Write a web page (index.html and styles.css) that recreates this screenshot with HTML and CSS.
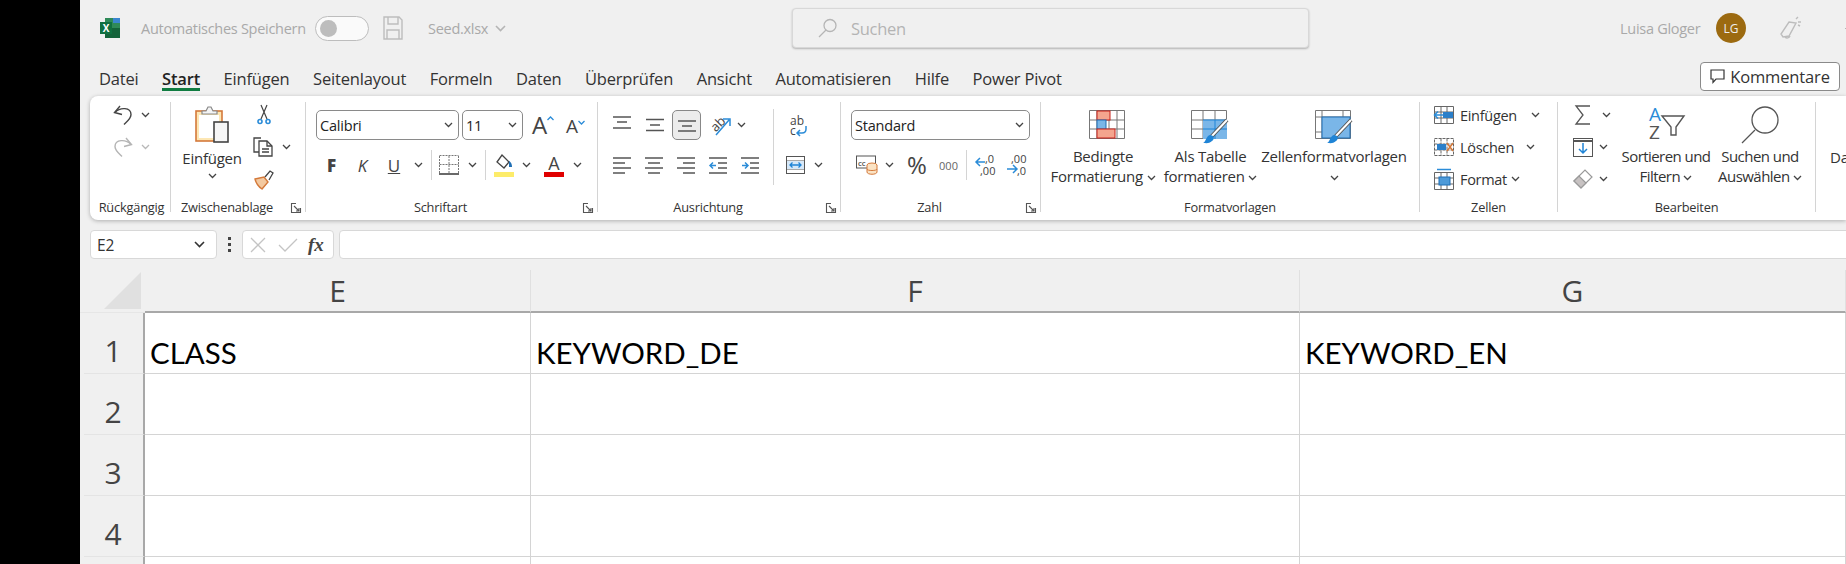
FILE: index.html
```html
<!DOCTYPE html>
<html lang="de">
<head>
<meta charset="utf-8">
<title>Seed.xlsx</title>
<link rel="stylesheet" href="styles.css">
</head>
<body>
<div class="strip"></div>
<div class="app">
  <header class="titlebar">
    <svg class="ml20" width="20" height="20" viewBox="0 0 20 20"><rect x="5" y="0" width="15" height="10" fill="#2f8a58"/><rect x="13" y="0" width="7" height="5" fill="#3a86cf"/><rect x="5" y="10" width="15" height="10" fill="#14633a"/><rect x="0" y="4" width="12" height="12" fill="#107040"/><text x="6" y="14" class="xl">X</text></svg>
    <span class="tt w166 ml21">Automatisches Speichern</span>
    <span class="toggle ml8"><i></i></span>
    <svg class="ml14" width="20" height="24" viewBox="0 0 20 24" fill="none" stroke="#bdbdbd" stroke-width="1.4"><path d="M1 1h15l3 3v19H1z"/><path d="M5 1v7h10V1M4 23v-9h12v9"/></svg>
    <span class="tt w60 ml25">Seed.xlsx</span>
    <svg class="ml7" width="11" height="7" viewBox="0 0 11 7" fill="none" stroke="#b5b5b5" stroke-width="1.6"><path d="M1 1l4.500 4.500L10 1"/></svg>
    <div class="search">
      <svg width="20" height="20" viewBox="0 0 20 20" fill="none" stroke="#b5b5b5" stroke-width="1.3"><circle cx="12" cy="7.500" r="6"/><path d="M8 12l-7 7"/></svg>
      <span class="stext">Suchen</span>
    </div>
    <span class="tt w82 ml311">Luisa Gloger</span>
    <span class="avatar ml14">LG</span>
    <svg class="ml34" width="22" height="24" viewBox="0 0 22 24" fill="none" stroke="#bdbdbd" stroke-width="1.400"><path d="M9 6l7 1-7 13-6 1-2-3zM5 21a3 3 0 0 0 5-1M16 3l2-2M18 6h3M18 9l2 1"/></svg>
    <span class="minus"></span>
  </header>

  <nav class="tabs">
    <span class="tab">Datei</span>
    <span class="tab active">Start</span>
    <span class="tab">Einfügen</span>
    <span class="tab">Seitenlayout</span>
    <span class="tab">Formeln</span>
    <span class="tab">Daten</span>
    <span class="tab">Überprüfen</span>
    <span class="tab">Ansicht</span>
    <span class="tab">Automatisieren</span>
    <span class="tab">Hilfe</span>
    <span class="tab">Power Pivot</span>
    <button class="comments"><svg width="15" height="15" viewBox="0 0 15 15" fill="none" stroke="#333" stroke-width="1.200"><path d="M1 1h13v9H6l-3 3.500V10H1z"/></svg>Kommentare</button>
  </nav>

  <section class="ribbon">
    <!-- Rückgängig -->
    <div class="group g1">
      <div class="body stack pl23">
        <div class="row">
          <svg width="20" height="20" viewBox="0 0 20 20" fill="none" stroke="#444" stroke-width="1.400"><path d="M7 1L1.500 7.500 9 9.500"/><path d="M2 7.500C7 2 18 2 18 9.500c0 4-3.500 6.500-7 10"/></svg>
          <svg class="chev ml8" viewBox="0 0 9 6"><path d="M1 1l3.500 3.500L8 1"/></svg>
        </div>
        <div class="row">
          <svg width="20" height="20" viewBox="0 0 20 20" fill="none" stroke="#b4b4b4" stroke-width="1.400"><path d="M13 1l5.500 6.500L11 9.500"/><path d="M18 7.500C13 2 2 2 2 9.500c0 4 3.500 6.500 7 10"/></svg>
          <svg class="chev dim ml8" viewBox="0 0 9 6"><path d="M1 1l3.500 3.500L8 1"/></svg>
        </div>
      </div>
      <div class="lab first"><span>Rückgängig</span></div>
    </div>

    <!-- Zwischenablage -->
    <div class="group g2">
      <div class="body flex">
        <div class="big w82">
          <svg class="pad-t4" width="34" height="37" viewBox="0 0 34 37"><rect x="1" y="5" width="26" height="30" fill="#fde7b4" stroke="#d4793a" stroke-width="1.600"/><rect x="4" y="9" width="20" height="23" fill="#fff"/><path d="M7 8V5h4l2-4h3l2 4h4v3z" fill="#f4f4f4" stroke="#888" stroke-width="1.200"/><rect x="19" y="16" width="14" height="20" fill="#f6f6f6" stroke="#444" stroke-width="1.600"/></svg>
          <span class="bigtext einf">Einfügen</span>
          <svg class="chev mt5" viewBox="0 0 9 6"><path d="M1 1l3.500 3.500L8 1"/></svg>
        </div>
        <div class="stack">
          <div class="row">
            <svg class="ml4" width="14" height="20" viewBox="0 0 14 20" fill="none" stroke="#444" stroke-width="1.200"><path d="M4 0l6 14M10 0L4 14"/><g stroke="#2b8cd8" stroke-width="1.600"><circle cx="3" cy="16.500" r="2"/><circle cx="11" cy="16.500" r="2"/></g></svg>
          </div>
          <div class="row">
            <svg width="20" height="20" viewBox="0 0 20 20" fill="none" stroke="#444" stroke-width="1.300"><path d="M8 1H1v14h5"/><path d="M6 4h8l5 5v10H6z" fill="#fff"/><path d="M14 4v5h5M9 12h7M9 15h7"/></svg>
            <svg class="chev ml9" viewBox="0 0 9 6"><path d="M1 1l3.500 3.500L8 1"/></svg>
          </div>
          <div class="row">
            <svg class="ml1" width="20" height="19" viewBox="0 0 20 19"><path d="M1 9l9-2 4 5-6 7C5 17 2 13 1 9z" fill="#f3c9a0" stroke="#d4793a" stroke-width="1.400"/><path d="M11 7l5-6 3 2-4 7" fill="#fff" stroke="#444" stroke-width="1.300"/></svg>
          </div>
        </div>
      </div>
      <div class="lab"><span>Zwischenablage</span><svg class="launch" viewBox="0 0 10 10" fill="none" stroke="#555" stroke-width="1.100"><path d="M9.500 5V9.500H.5V.5H5"/><path d="M3 3l5 5M8 5v3H5"/></svg></div>
    </div>

    <!-- Schriftart -->
    <div class="group g3">
      <div class="body pl10 rows2">
        <div class="row">
          <div class="select w143"><span>Calibri</span><svg class="chev" viewBox="0 0 9 6"><path d="M1 1l3.500 3.500L8 1"/></svg></div>
          <div class="select w61 ml3"><span>11</span><svg class="chev" viewBox="0 0 9 6"><path d="M1 1l3.500 3.500L8 1"/></svg></div>
          <span class="aa big-a ml9">A<svg width="7" height="5" viewBox="0 0 7 5" fill="none" stroke="#2b8cd8" stroke-width="1.300"><path d="M.5 4L3.500 1l3 3"/></svg></span>
          <span class="aa small-a ml14">A<svg width="7" height="5" viewBox="0 0 7 5" fill="none" stroke="#2b8cd8" stroke-width="1.300"><path d="M.5 1l3 3 3-3"/></svg></span>
        </div>
        <div class="row">
          <span class="fmt w31 bold">F</span>
          <span class="fmt w31 ital">K</span>
          <span class="fmt w32"><u>U</u></span>
          <svg class="chev ml4" viewBox="0 0 9 6"><path d="M1 1l3.500 3.500L8 1"/></svg>
          <i class="vsep ml8"></i>
          <svg class="ml7" width="20" height="20" viewBox="0 0 20 20" fill="none" stroke="#777" stroke-width="1" stroke-dasharray="2 1"><path d="M.5 1v17M10 1v17M19.500 1v17M.5 .5h19M.5 9.500h19"/><path d="M0 19h20" stroke="#444" stroke-width="1.600" stroke-dasharray="none"/></svg>
          <svg class="chev ml9" viewBox="0 0 9 6"><path d="M1 1l3.500 3.500L8 1"/></svg>
          <i class="vsep ml8"></i>
          <svg class="ml8" width="20" height="23" viewBox="0 0 20 23"><path d="M8 1l7 7-5 6-7-6z" fill="#fff" stroke="#444" stroke-width="1.300"/><path d="M15 7c2 1 3 3 3 6h-3z" fill="#1f6fb5"/><rect y="18" width="20" height="5" fill="#fdec6a"/></svg>
          <svg class="chev ml8" viewBox="0 0 9 6"><path d="M1 1l3.500 3.500L8 1"/></svg>
          <span class="fc ml13">A<i></i></span>
          <svg class="chev ml9" viewBox="0 0 9 6"><path d="M1 1l3.500 3.500L8 1"/></svg>
        </div>
      </div>
      <div class="lab"><span>Schriftart</span><svg class="launch" viewBox="0 0 10 10" fill="none" stroke="#555" stroke-width="1.100"><path d="M9.500 5V9.500H.5V.5H5"/><path d="M3 3l5 5M8 5v3H5"/></svg></div>
    </div>

    <!-- Ausrichtung -->
    <div class="group g4">
      <div class="body flex">
        <div class="alignleft rows2 pl15">
          <div class="row">
            <svg class="al" viewBox="0 0 18 18"><path d="M0 1h18M4 6h10M0 12h18"/></svg>
            <svg class="al ml15" viewBox="0 0 18 18"><path d="M0 3.500h18M4 9h10M0 14.500h18"/></svg>
            <span class="selbtn ml8"><svg class="al" viewBox="0 0 18 18"><path d="M0 5h18M4 10h10M0 15h18"/></svg></span>
            <svg class="ml8" width="22" height="24" viewBox="0 0 22 24"><text x="10" y="15" class="ab" transform="rotate(-45 10 12)">ab</text><path d="M7 22L20 7M14 6h7v7" fill="none" stroke="#2b8cd8" stroke-width="1.500"/></svg>
            <svg class="chev ml6" viewBox="0 0 9 6"><path d="M1 1l3.500 3.500L8 1"/></svg>
          </div>
          <div class="row tight">
            <svg class="al" viewBox="0 0 18 18"><path d="M0 2h18M0 7h12M0 12h18M0 17h12"/></svg>
            <svg class="al ml14" viewBox="0 0 18 18"><path d="M0 2h18M3 7h12M0 12h18M3 17h12"/></svg>
            <svg class="al ml14" viewBox="0 0 18 18"><path d="M0 2h18M6 7h12M0 12h18M6 17h12"/></svg>
            <svg class="al ml14" viewBox="0 0 18 18"><path d="M0 2h18M9 7h9M9 12h9M0 17h18"/><path d="M7 9.500H1M4 6.500l-3 3 3 3" fill="none" stroke="#2b8cd8" stroke-width="1.500"/></svg>
            <svg class="al ml14" viewBox="0 0 18 18"><path d="M0 2h18M9 7h9M9 12h9M0 17h18"/><path d="M1 9.500h6M4 6.500l3 3-3 3" fill="none" stroke="#2b8cd8" stroke-width="1.500"/></svg>
          </div>
        </div>
        <div class="rows2">
          <div class="row">
            <svg class="ml15" width="18" height="22" viewBox="0 0 18 22"><text x="1" y="11" class="ab2">ab</text><text x="1" y="21" class="ab2">c</text><path d="M17 12v3c0 3-2 4-4 4H8M11 16l-3 3 3 3" fill="none" stroke="#2b8cd8" stroke-width="1.500"/></svg>
          </div>
          <div class="row tight">
            <svg class="ml12" width="19" height="18" viewBox="0 0 19 18"><rect x=".5" y=".5" width="18" height="17" fill="#fff" stroke="#555"/><path d="M.5 5h18M.5 13h18" stroke="#555"/><path d="M1 5h17v8H1z" fill="#d6e8f8"/><path d="M4 9h11M6.500 6.500L4 9l2.500 2.500M12.500 6.500L15 9l-2.500 2.500" fill="none" stroke="#1f84d6" stroke-width="1.300"/></svg>
            <svg class="chev ml9" viewBox="0 0 9 6"><path d="M1 1l3.500 3.500L8 1"/></svg>
          </div>
        </div>
      </div>
      <div class="lab"><span>Ausrichtung</span><svg class="launch" viewBox="0 0 10 10" fill="none" stroke="#555" stroke-width="1.100"><path d="M9.500 5V9.500H.5V.5H5"/><path d="M3 3l5 5M8 5v3H5"/></svg></div>
    </div>

    <!-- Zahl -->
    <div class="group g5">
      <div class="body pl10 rows2">
        <div class="row">
          <div class="select w179"><span>Standard</span><svg class="chev" viewBox="0 0 9 6"><path d="M1 1l3.500 3.500L8 1"/></svg></div>
        </div>
        <div class="row">
          <svg class="ml5" width="22" height="20" viewBox="0 0 22 20"><rect x=".5" y="1" width="19" height="12" fill="#fff" stroke="#555"/><text x="2" y="10.500" class="cc">CC</text><ellipse cx="16" cy="10" rx="5" ry="2" fill="#fbe3c4" stroke="#d4793a"/><path d="M11 10v7c0 3 10 3 10 0v-7M11 14c0 2 10 2 10 0" fill="#fbe3c4" stroke="#d4793a"/></svg>
          <svg class="chev ml7" viewBox="0 0 9 6"><path d="M1 1l3.500 3.500L8 1"/></svg>
          <span class="pct ml13">%</span>
          <span class="thou ml13">000</span>
          <i class="vsep ml8"></i>
          <svg class="ml7" width="21" height="24" viewBox="0 0 21 24"><text x="11" y="10" class="dec">,0</text><text x="6" y="22" class="dec">,00</text><path d="M11 9H2M6 5L2 9l4 4" fill="none" stroke="#2b8cd8" stroke-width="1.500"/></svg>
          <svg class="ml11" width="21" height="24" viewBox="0 0 21 24"><text x="5" y="10" class="dec">,00</text><text x="11" y="22" class="dec">,0</text><path d="M1 16h10M7 12l4 4-4 4" fill="none" stroke="#2b8cd8" stroke-width="1.500"/></svg>
        </div>
      </div>
      <div class="lab"><span>Zahl</span><svg class="launch" viewBox="0 0 10 10" fill="none" stroke="#555" stroke-width="1.100"><path d="M9.500 5V9.500H.5V.5H5"/><path d="M3 3l5 5M8 5v3H5"/></svg></div>
    </div>

    <!-- Formatvorlagen -->
    <div class="group g6">
      <div class="body flex">
        <div class="big w124 pad-t8">
          <div class="slot"><svg class="shift4" width="36" height="29" viewBox="0 0 36 29"><path d="M.5 .5h35v28H.5zM.5 10h35M.5 19h35M8 .5v28M20 .5v28M28 .5v28" fill="#fff" stroke="#777"/><rect x="8" y="1" width="13" height="9" fill="#f4a58e" stroke="#c8201a"/><rect x="8" y="10" width="9" height="9" fill="#7ab6e8" stroke="#1f6fb5"/><rect x="8" y="19" width="18" height="9" fill="#f4a58e" stroke="#c8201a"/></svg></div>
          <span class="bigtext">Bedingte</span>
          <span class="bigtext">Formatierung <svg class="chev" viewBox="0 0 9 6"><path d="M1 1l3.500 3.500L8 1"/></svg></span>
        </div>
        <div class="big w91 pad-t8">
          <div class="slot"><svg width="39" height="34" viewBox="0 0 39 34"><path d="M.5 .5h35v28H.5zM.5 10h35M.5 19h35M12 .5v28M24 .5v28" fill="#fff" stroke="#777"/><rect x="12" y="10" width="24" height="19" fill="#7ab6e8"/><path d="M12 10h24M12 19h24M24 10v19" stroke="#1f84d6"/><path d="M36 10L20 27" stroke="#555" stroke-width="4"/><path d="M36 10L20 27" stroke="#fff" stroke-width="2"/><path d="M12 33c3-1 3-7 7-8 4 0 5 4 2 6-3 3-6 2-9 2z" fill="#1f84d6"/></svg></div>
          <span class="bigtext">Als Tabelle</span>
          <span class="bigtext">formatieren <svg class="chev" viewBox="0 0 9 6"><path d="M1 1l3.500 3.500L8 1"/></svg></span>
        </div>
        <div class="big w156 pad-t8">
          <div class="slot"><svg width="39" height="34" viewBox="0 0 39 34"><path d="M.5 .5h35v28H.5zM.5 7h35M.5 22h35M7 .5v28M28 .5v28" fill="#fff" stroke="#777"/><rect x="7" y="7" width="28" height="21" fill="#7ab6e8" stroke="#1f6fb5"/><path d="M36 10L20 27" stroke="#555" stroke-width="4"/><path d="M36 10L20 27" stroke="#fff" stroke-width="2"/><path d="M12 33c3-1 3-7 7-8 4 0 5 4 2 6-3 3-6 2-9 2z" fill="#1f84d6"/></svg></div>
          <span class="bigtext">Zellenformatvorlagen</span>
          <span class="bigtext"><svg class="chev" viewBox="0 0 9 6"><path d="M1 1l3.500 3.500L8 1"/></svg></span>
        </div>
      </div>
      <div class="lab solo"><span>Formatvorlagen</span></div>
    </div>

    <!-- Zellen -->
    <div class="group g7">
      <div class="body stack pl14">
        <div class="row">
          <svg width="20" height="18" viewBox="0 0 20 18"><path d="M.5 .5h19v17H.5zM.5 6h19M.5 12h19M7 .5v17M13 .5v17" fill="#fff" stroke="#666"/><rect x="9" y="6" width="10" height="6" fill="#2b7fc9"/><path d="M9 9H1M4 5.500L.5 9 4 12.500" fill="none" stroke="#2b8cd8" stroke-width="1.500"/></svg>
          <span class="cmd w71 ml6">Einfügen</span>
          <svg class="chev" viewBox="0 0 9 6"><path d="M1 1l3.500 3.500L8 1"/></svg>
        </div>
        <div class="row">
          <svg width="20" height="18" viewBox="0 0 20 18"><path d="M.5 .5h19v17H.5zM.5 6h19M.5 12h19M7 .5v17M13 .5v17" fill="#fff" stroke="#666" stroke-dasharray="3 1"/><rect x="3" y="6" width="9" height="6" fill="#2b7fc9"/><path d="M13 5l6 8M19 5l-6 8" stroke="#d4793a" stroke-width="1.500"/></svg>
          <span class="cmd w66 ml6">Löschen</span>
          <svg class="chev" viewBox="0 0 9 6"><path d="M1 1l3.500 3.500L8 1"/></svg>
        </div>
        <div class="row">
          <svg width="20" height="22" viewBox="0 0 20 22"><path d="M.5 4.500h19v17H.5zM.5 10h19M.5 16h19M7 4.500v17M13 4.500v17" fill="#fff" stroke="#666"/><rect x="5" y="9" width="11" height="8" fill="#4d9ad8" stroke="#1f6fb5"/><path d="M3 1.500h14" stroke="#2b8cd8" stroke-width="1.500"/></svg>
          <span class="cmd w51 ml6">Format</span>
          <svg class="chev" viewBox="0 0 9 6"><path d="M1 1l3.500 3.500L8 1"/></svg>
        </div>
      </div>
      <div class="lab solo"><span>Zellen</span></div>
    </div>

    <!-- Bearbeiten -->
    <div class="group g8">
      <div class="body flex">
        <div class="stack w62">
          <div class="row">
            <svg class="ml17" width="16" height="20" viewBox="0 0 16 20" fill="none" stroke="#555" stroke-width="1.300"><path d="M15 1H1l7 9-7 9h14"/></svg>
            <svg class="chev ml11" viewBox="0 0 9 6"><path d="M1 1l3.500 3.500L8 1"/></svg>
          </div>
          <div class="row">
            <svg class="ml15" width="20" height="19" viewBox="0 0 20 19"><rect x=".5" y=".5" width="19" height="18" fill="#fff" stroke="#555"/><path d="M.5 3h19" stroke="#555" stroke-width="2"/><path d="M10 5v10M6 11l4 4 4-4" fill="none" stroke="#1f84d6" stroke-width="1.500"/></svg>
            <svg class="chev ml6" viewBox="0 0 9 6"><path d="M1 1l3.500 3.500L8 1"/></svg>
          </div>
          <div class="row">
            <svg class="ml15" width="20" height="20" viewBox="0 0 20 20"><path d="M1 12L12 1l7 7L8 19z" fill="#fff" stroke="#999" stroke-width="1.200"/><path d="M1 12l5-5 7 7-5 5z" fill="#c7c2c2" stroke="#999" stroke-width="1.200"/></svg>
            <svg class="chev ml6" viewBox="0 0 9 6"><path d="M1 1l3.500 3.500L8 1"/></svg>
          </div>
        </div>
        <div class="big w92 pad-t4">
          <div class="slot h40"><svg width="37" height="34" viewBox="0 0 37 34"><text x="1" y="15" class="sortA">A</text><text x="1" y="33" class="sortZ">Z</text><path d="M14 10h22l-8 11v8h-5v-8z" fill="#fff" stroke="#555" stroke-width="1.400"/></svg></div>
          <span class="bigtext snug">Sortieren und</span>
          <span class="bigtext snug">Filtern <svg class="chev" viewBox="0 0 9 6"><path d="M1 1l3.500 3.500L8 1"/></svg></span>
        </div>
        <div class="big w96 pad-t4">
          <div class="slot h40"><svg width="38" height="37" viewBox="0 0 38 37" fill="none" stroke="#555" stroke-width="1.300"><circle cx="24" cy="14" r="13"/><path d="M14 24L1 37"/></svg></div>
          <span class="bigtext snug">Suchen und</span>
          <span class="bigtext snug">Auswählen <svg class="chev" viewBox="0 0 9 6"><path d="M1 1l3.500 3.500L8 1"/></svg></span>
        </div>
      </div>
      <div class="lab solo"><span>Bearbeiten</span></div>
    </div>

    <div class="group g9"><span class="bigtext">Da</span></div>
  </section>

  <div class="fbar">
    <div class="namebox"><span>E2</span><svg width="11" height="7" viewBox="0 0 11 7" fill="none" stroke="#333" stroke-width="1.600"><path d="M1 1l4.500 4.500L10 1"/></svg></div>
    <div class="dots"><i></i><i></i><i></i></div>
    <div class="fxbox">
      <svg width="16" height="16" viewBox="0 0 16 16" fill="none" stroke="#c4c4c4" stroke-width="1.300"><path d="M1 1l14 14M15 1L1 15"/></svg>
      <svg width="20" height="14" viewBox="0 0 20 14" fill="none" stroke="#c4c4c4" stroke-width="1.300"><path d="M1 7l6 6L19 1"/></svg>
      <span class="fx">fx</span>
    </div>
    <div class="finput"></div>
  </div>

  <div class="sheet">
    <div class="corner"><i></i></div>
    <div class="colh">E</div>
    <div class="colh">F</div>
    <div class="colh">G</div>
    <div class="rowh">1</div><div class="cell">CLASS</div><div class="cell">KEYWORD_DE</div><div class="cell">KEYWORD_EN</div>
    <div class="rowh">2</div><div class="cell"></div><div class="cell"></div><div class="cell"></div>
    <div class="rowh">3</div><div class="cell"></div><div class="cell"></div><div class="cell"></div>
    <div class="rowh">4</div><div class="cell"></div><div class="cell"></div><div class="cell"></div>
    <div class="rowh"></div><div class="cell"></div><div class="cell"></div><div class="cell"></div>
  </div>
</div>
</body>
</html>
```
FILE: styles.css
```css
* { box-sizing: border-box; }
html, body { margin: 0; height: 100%; overflow: hidden; }
body {
  display: flex;
  width: 1846px;
  height: 564px;
  background: #000;
  font-family: "Open Sans", "Noto Sans", sans-serif;
  color: #333;
}
svg { display: block; flex: none; overflow: visible; }
i { font-style: normal; }
.strip { width: 80px; flex: none; background: #000; }
.app { width: 1766px; background: #f0f0f0; overflow: hidden; }

/* helpers */
.flex { display: flex; }
.ml1 { margin-left: 1px; } .ml3 { margin-left: 3px; } .ml4 { margin-left: 4px; } .ml5 { margin-left: 5px; }
.ml6 { margin-left: 6px; } .ml7 { margin-left: 7px; } .ml8 { margin-left: 8px; } .ml9 { margin-left: 9px; }
.ml11 { margin-left: 11px; } .ml12 { margin-left: 12px; } .ml13 { margin-left: 13px; } .ml14 { margin-left: 14px; }
.ml15 { margin-left: 15px; } .ml17 { margin-left: 17px; } .ml20 { margin-left: 20px; } .ml21 { margin-left: 21px; }
.ml25 { margin-left: 25px; } .ml34 { margin-left: 34px; } .ml311 { margin-left: 311px; }
.pl10 { padding-left: 10px; } .pl14 { padding-left: 14px; } .pl15 { padding-left: 15px; } .pl23 { padding-left: 23px; }
.w31 { width: 31px; } .w32 { width: 32px; } .w51 { width: 51px; } .w60 { width: 60px; } .w61 { width: 61px; }
.w62 { width: 62px; } .w66 { width: 66px; } .w71 { width: 71px; } .w82 { width: 82px; } .w91 { width: 91px; } .w92 { width: 92px; }
.w96 { width: 96px; } .w124 { width: 124px; } .w143 { width: 143px; } .w156 { width: 156px; }
.w166 { width: 166px; } .w179 { width: 179px; }
.pad-t4 { margin-top: 4px; } .mt5 { margin-top: 5px; }
.big.pad-t4 { padding-top: 4px; margin-top: 0; } .big.pad-t8 { padding-top: 8px; }

/* title bar */
.titlebar { height: 56px; display: flex; align-items: center; }
.tt { font-size: 14.500px; letter-spacing: -.28px; color: #a9a9a9; white-space: nowrap; flex: none; }
.xl { font: 700 10px "Open Sans", sans-serif; fill: #fff; text-anchor: middle; }
.toggle {
  width: 54px; height: 25px; flex: none;
  border: 1px solid #bdbdbd; border-radius: 13px; background: #fafafa;
  display: flex; align-items: center; padding-left: 4px;
}
.toggle i { width: 17px; height: 17px; border-radius: 50%; background: #bdbdbd; }
.search {
  margin-left: 286px; width: 517px; height: 40px; flex: none;
  background: #f0f0f0; border: 1px solid #d8d8d8; border-radius: 4px;
  box-shadow: 0 1px 2px #b4b4b4;
  display: flex; align-items: center; padding-left: 25px;
}
.stext { margin-left: 13px; font-size: 16.500px; letter-spacing: -.3px; color: #b4b4b4; }
.avatar {
  width: 30px; height: 30px; flex: none; border-radius: 50%;
  background: #9c6a10; color: #eee; font-size: 12px;
  display: flex; align-items: center; justify-content: center;
}
.minus { margin-left: 43px; width: 3px; height: 1px; background: #b5b5b5; flex: none; }

/* tabs */
.tabs { height: 40px; display: flex; align-items: flex-start; padding-left: 19px; gap: 23.500px; }
.tab {
  margin-top: 11px; height: 24px; line-height: 23px;
  font-size: 16.500px; letter-spacing: -.18px; color: #333; white-space: nowrap; flex: none;
}
.tab.active { font-weight: 600; color: #222; border-bottom: 3px solid #107c41; }
.comments {
  margin: 6px 6px 0 auto; width: 140px; height: 29px; flex: none;
  background: #fff; border: 1px solid #8a8a8a; border-radius: 4px;
  display: flex; align-items: center; justify-content: center; gap: 5px;
  font: 16.500px "Open Sans", sans-serif; letter-spacing: -.15px; color: #333; padding: 0;
}

/* ribbon */
.ribbon {
  margin-left: 10px; height: 124px; display: flex;
  background: #fff; border-radius: 8px 0 0 8px;
  box-shadow: 0 1px 4px rgba(0,0,0,.28);
  padding-top: 6px;
}
.group { height: 110px; border-right: 1px solid #d4d4d4; flex: none; }
.g1 { width: 81px; } .g2 { width: 135px; } .g3 { width: 292px; } .g4 { width: 243px; }
.g5 { width: 200px; } .g6 { width: 379px; } .g7 { width: 138px; } .g8 { width: 258px; }
.g9 { width: 30px; border: 0; padding: 44px 0 0 14px; }
.body { height: 90px; }
.row { display: flex; align-items: center; }
.stack { display: grid; grid-template-rows: 26px 26px 26px; row-gap: 6px; align-content: start; }
.rows2 { display: grid; grid-template-rows: 30px 30px; row-gap: 10px; padding-top: 8px; align-content: start; }
.rows2 .tight { margin-top: -1px; }
.lab {
  display: flex; height: 20px; padding-top: 7px; font-size: 12.800px; letter-spacing: -.2px; line-height: 16px; color: #333;
  white-space: nowrap;
}
.lab.first { padding-left: 3px; }
.lab span { flex: 1; text-align: center; }
.launch { width: 10px; height: 10px; margin: 4px 4px 0 8px; }
.chev { width: 9px; height: 6px; fill: none; stroke: #444; stroke-width: 1.300; display: inline-block; vertical-align: middle; }
.chev.dim { stroke: #b8b8b8; }
.big { display: flex; flex-direction: column; align-items: center; flex: none; }
.bigtext { font-size: 15px; line-height: 20px; letter-spacing: -.25px; color: #333; white-space: nowrap; }
.bigtext.snug { letter-spacing: -.55px; }
.einf { margin-top: 5px; }
.slot { height: 36px; }
.slot.h40 { height: 40px; }
.shift4 { margin-left: 8px; }
.select {
  height: 30px; flex: none; background: #fff;
  border: 1px solid #8a8a8a; border-radius: 5px;
  display: flex; align-items: center; justify-content: space-between;
  padding: 0 5px 0 3px; font-size: 14.500px; letter-spacing: -.2px; color: #222;
}
.aa { display: flex; flex: none; color: #444; line-height: 1; font-weight: 400; }
.aa svg { margin-top: 3px; }
.big-a { font-size: 24px; width: 20px; }
.small-a { font-size: 19px; width: 17px; padding-top: 3px; }
.fmt { font-size: 17px; text-align: center; color: #444; flex: none; }
.bold { font-weight: 800; }
.ital { font-style: italic; }
.vsep { width: 1px; height: 30px; background: #d4d4d4; flex: none; }
.fc { width: 20px; height: 23px; text-align: center; font-size: 18px; line-height: 18px; color: #444; flex: none; }
.fc i { display: block; height: 5px; background: #e00000; }
.alignleft { width: 176px; height: 76px; margin-top: 7px; padding-top: 1px; border-right: 1px solid #d4d4d4; }
.al { width: 18px; height: 18px; fill: none; stroke: #555; stroke-width: 1.600; }
.selbtn {
  width: 29px; height: 30px; background: #ececec; border: 1px solid #888; border-radius: 5px;
  display: flex; align-items: center; justify-content: center; flex: none;
}
.ab { font: 13px "Open Sans", sans-serif; fill: #444; text-anchor: middle; }
.ab2 { font: 12px "Open Sans", sans-serif; fill: #444; }
.cc { font: 700 6px "Open Sans", sans-serif; fill: #555; }
.dec { font: 11px "Open Sans", sans-serif; fill: #444; }
.pct { width: 19px; font-size: 24px; line-height: 30px; color: #444; text-align: center; flex: none; }
.thou { width: 19px; font-size: 11px; color: #666; text-align: center; flex: none; }
.cmd { font-size: 14.500px; letter-spacing: -.3px; color: #333; flex: none; white-space: nowrap; }
.sortA { font: 19px "Open Sans", sans-serif; fill: #2b8cd8; }
.sortZ { font: 19px "Open Sans", sans-serif; fill: #555; }

/* formula bar */
.fbar { margin-top: 10px; height: 29px; display: flex; padding-left: 10px; }
.namebox {
  width: 127px; flex: none; background: #fff; border: 1px solid #d8d8d8; border-radius: 4px;
  display: flex; align-items: center; justify-content: space-between; padding: 0 11px 0 6px;
  font-size: 15.500px; color: #333;
}
.dots { width: 25px; flex: none; display: flex; flex-direction: column; align-items: center; justify-content: center; gap: 3px; }
.dots i { width: 3px; height: 3px; background: #444; }
.fxbox {
  width: 92px; flex: none; background: #fff; border: 1px solid #d8d8d8; border-radius: 4px;
  display: flex; align-items: center; padding-left: 7px; gap: 12px;
}
.fx { font: italic 700 19px "Liberation Serif", serif; color: #444; margin-left: -2px; }
.finput { margin-left: 5px; flex: 1; margin-right: -8px; background: #fff; border: 1px solid #d8d8d8; border-radius: 4px; }

/* sheet */
.sheet {
  margin-top: 11px;
  display: grid;
  grid-template-columns: 65px 386px 769px 546px;
  grid-template-rows: 43px repeat(5, 61px);
}
.corner { display: flex; padding: 2px 3px 0 24px; border-bottom: 1px solid #e6e6e6; }
.corner i { width: 37px; height: 37px; background: #e0e0e0; clip-path: polygon(100% 0, 100% 100%, 0 100%); }
.colh {
  border-bottom: 2px solid #a8a8a8; border-right: 1px solid #e0e0e0;
  text-align: center; font-size: 30px; line-height: 42px; color: #444;
}
.rowh {
  border-bottom: 1px solid #e4e4e4; border-right: 2px solid #a8a8a8;
  margin-left: 4px; padding-right: 1px; font-size: 30px; line-height: 1; color: #444;
  display: flex; align-items: flex-end; justify-content: center; padding-bottom: 7px;
}
.cell {
  background: #fff; border-right: 1px solid #d4d4d4; border-bottom: 1px solid #d4d4d4;
  display: flex; align-items: flex-end; padding: 0 0 3px 5px;
  font-family: "Lato", sans-serif; font-size: 29.500px; line-height: 1.2; color: #000;
}
```
